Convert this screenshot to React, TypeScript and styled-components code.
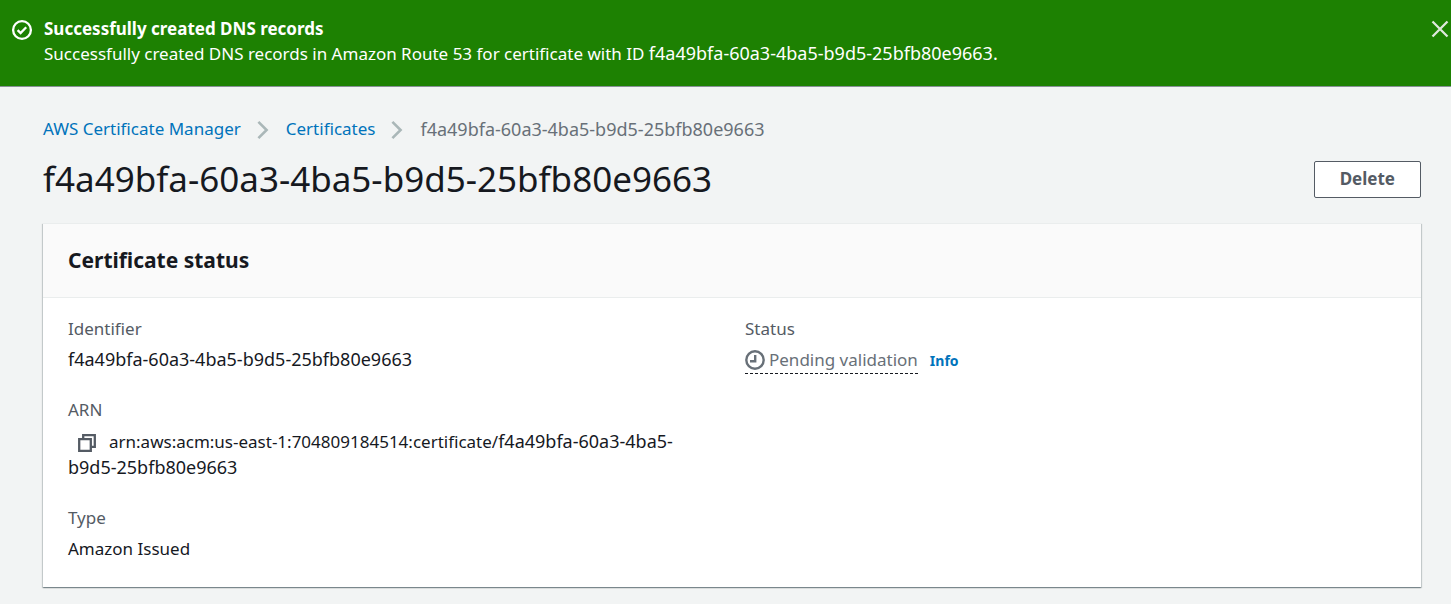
import React from "react";
import styled, { createGlobalStyle } from "styled-components";

const GlobalStyle = createGlobalStyle`
  *, *::before, *::after { box-sizing: border-box; }
  body {
    margin: 0;
    min-height: 100vh;
    background: #f2f4f4;
    color: #16191f;
    font-family: "Noto Sans", "Open Sans", sans-serif;
    font-size: 17px;
    line-height: 26px;
  }
`;

const Flash = styled.section`
  display: flex;
  align-items: flex-start;
  gap: 11px;
  min-height: 87px;
  padding: 16px 2px 16px 11px;
  background: #1d8102;
  color: #fff;
  border-bottom: 1px solid #879196;
`;

const FlashIcon = styled.svg`
  flex: none;
  width: 22px;
  height: 22px;
  margin-top: 3px;
`;

const FlashBody = styled.div`
  flex: 1;
  line-height: 25px;
`;

const FlashTitle = styled.h2`
  margin: 0;
  font-size: 17px;
  font-weight: 700;
`;

const FlashText = styled.p`
  margin: 0;
`;

const CloseButton = styled.button`
  display: flex;
  flex: none;
  margin-top: 4px;
  padding: 0;
  border: 0;
  background: none;
  color: #dfe8dc;
  cursor: pointer;
`;

const Main = styled.main`
  padding: 29px 30px 16px 43px;
`;

const BreadcrumbList = styled.ol`
  display: flex;
  flex-wrap: wrap;
  margin: 0;
  padding: 0;
  list-style: none;
`;

const Crumb = styled.li`
  display: flex;
  align-items: center;
  color: #687078;
`;

const Identifier = styled.span`
  font-size: 18px;
  line-height: 1;
`;

const Link = styled.a<{ $small?: boolean }>`
  color: #0073bb;
  text-decoration: none;
  font-size: ${(p) => (p.$small ? "14px" : "inherit")};
  font-weight: ${(p) => (p.$small ? 700 : 400)};
`;

const Chevron = styled.svg`
  width: 13px;
  height: 20px;
  margin: 2px 16px 0;
`;

const PageHeader = styled.header`
  display: flex;
  align-items: center;
  justify-content: space-between;
  gap: 24px;
  margin: 14px 0 21px;
`;

const PageTitle = styled.h1`
  margin: 0;
  font-size: 35px;
  font-weight: 400;
  line-height: 46px;
`;

const DeleteButton = styled.button`
  height: 37px;
  padding: 0 25px;
  border: 1px solid #545b64;
  border-radius: 2px;
  background: #fff;
  color: #545b64;
  font: 700 17px/26px "Noto Sans", "Open Sans", sans-serif;
  cursor: pointer;
`;

const Card = styled.section`
  background: #fff;
  border-top: 1px solid #eaeded;
  box-shadow: 0 1px 1px 0 rgba(0, 28, 36, 0.3), 1px 1px 1px 0 rgba(0, 28, 36, 0.15),
    -1px 1px 1px 0 rgba(0, 28, 36, 0.15);
`;

const CardHeader = styled.div`
  padding: 22px 25px;
  background: #fafafa;
  border-bottom: 1px solid #eaeded;
`;

const CardTitle = styled.h2`
  margin: 0;
  font-size: 21px;
  font-weight: 700;
  line-height: 29px;
`;

const Columns = styled.div`
  display: grid;
  grid-template-columns: 1fr 1fr;
  gap: 26px;
  padding: 18px 25px 25px;
`;

const Fields = styled.dl`
  display: flex;
  flex-direction: column;
  gap: 24px;
  min-width: 0;
  margin: 0;
`;

const Label = styled.dt`
  color: #545b64;
`;

const Value = styled.dd`
  margin: 5px 0 0;
`;

const CopyButton = styled.button`
  display: inline-block;
  height: 25px;
  margin: 0 12px 0 9px;
  padding: 5px 0 0;
  border: 0;
  background: none;
  color: #545b64;
  vertical-align: -5px;
  cursor: pointer;

  svg {
    display: block;
  }
`;

const StatusRow = styled.div`
  display: flex;
  align-items: center;
  gap: 12px;
`;

const Status = styled.span`
  display: inline-flex;
  align-items: center;
  gap: 4px;
  border-bottom: 1px dashed #16191f;
  color: #687078;
`;

const id = "f4a49bfa-60a3-4ba5-b9d5-25bfb80e9663";

const Separator = () => (
  <Chevron viewBox="0 0 13 20" fill="none" stroke="#aab7b8" strokeWidth="2.6" aria-hidden="true">
    <path d="M1.4 1.8 9.6 10 1.4 18.2" />
  </Chevron>
);

export default function App() {
  return (
    <>
      <GlobalStyle />
      <Flash role="status">
        <FlashIcon viewBox="0 0 22 22" fill="none" stroke="#fff" strokeWidth="2.3" aria-hidden="true">
          <circle cx="11" cy="11" r="8.9" />
          <path d="m6.6 11.1 3 3 5.6-5.8" />
        </FlashIcon>
        <FlashBody>
          <FlashTitle>Successfully created DNS records</FlashTitle>
          <FlashText>
            Successfully created DNS records in Amazon Route 53 for certificate with ID{" "}
            <Identifier>{id}.</Identifier>
          </FlashText>
        </FlashBody>
        <CloseButton aria-label="Dismiss">
          <svg width="18" height="18" viewBox="0 0 18 18" fill="none" stroke="currentColor" strokeWidth="2.3" aria-hidden="true">
            <path d="m1.5 1.5 15 15m0-15-15 15" />
          </svg>
        </CloseButton>
      </Flash>
      <Main>
        <nav aria-label="Breadcrumbs">
          <BreadcrumbList>
            <Crumb>
              <Link href="#manager">AWS Certificate Manager</Link>
              <Separator />
            </Crumb>
            <Crumb>
              <Link href="#certificates">Certificates</Link>
              <Separator />
            </Crumb>
            <Crumb aria-current="page">
              <Identifier>{id}</Identifier>
            </Crumb>
          </BreadcrumbList>
        </nav>
        <PageHeader>
          <PageTitle>{id}</PageTitle>
          <DeleteButton>Delete</DeleteButton>
        </PageHeader>
        <Card>
          <CardHeader>
            <CardTitle>Certificate status</CardTitle>
          </CardHeader>
          <Columns>
            <Fields>
              <div>
                <Label>Identifier</Label>
                <Value>
                  <Identifier>{id}</Identifier>
                </Value>
              </div>
              <div>
                <Label>ARN</Label>
                <Value>
                  <CopyButton aria-label="Copy ARN">
                    <svg width="20" height="20" viewBox="0 0 20 20" fill="none" stroke="currentColor" strokeWidth="2.3" aria-hidden="true">
                      <path d="M2.2 6.2h11.6v11.6H2.2z" />
                      <path d="M6.2 6V2.2h11.6v11.6H14" />
                    </svg>
                  </CopyButton>
                  arn:aws:acm:us-east-1:704809184514:certificate/<Identifier>{id}</Identifier>
                </Value>
              </div>
              <div>
                <Label>Type</Label>
                <Value>Amazon Issued</Value>
              </div>
            </Fields>
            <Fields>
              <div>
                <Label>Status</Label>
                <Value>
                  <StatusRow>
                    <Status>
                      <svg width="20" height="20" viewBox="0 0 20 20" fill="none" stroke="currentColor" strokeWidth="2.4" aria-hidden="true">
                        <circle cx="10" cy="10" r="8.7" />
                        <path d="M10.2 5v6.2H5" />
                      </svg>
                      Pending validation
                    </Status>
                    <Link $small href="#info">
                      Info
                    </Link>
                  </StatusRow>
                </Value>
              </div>
            </Fields>
          </Columns>
        </Card>
      </Main>
    </>
  );
}
